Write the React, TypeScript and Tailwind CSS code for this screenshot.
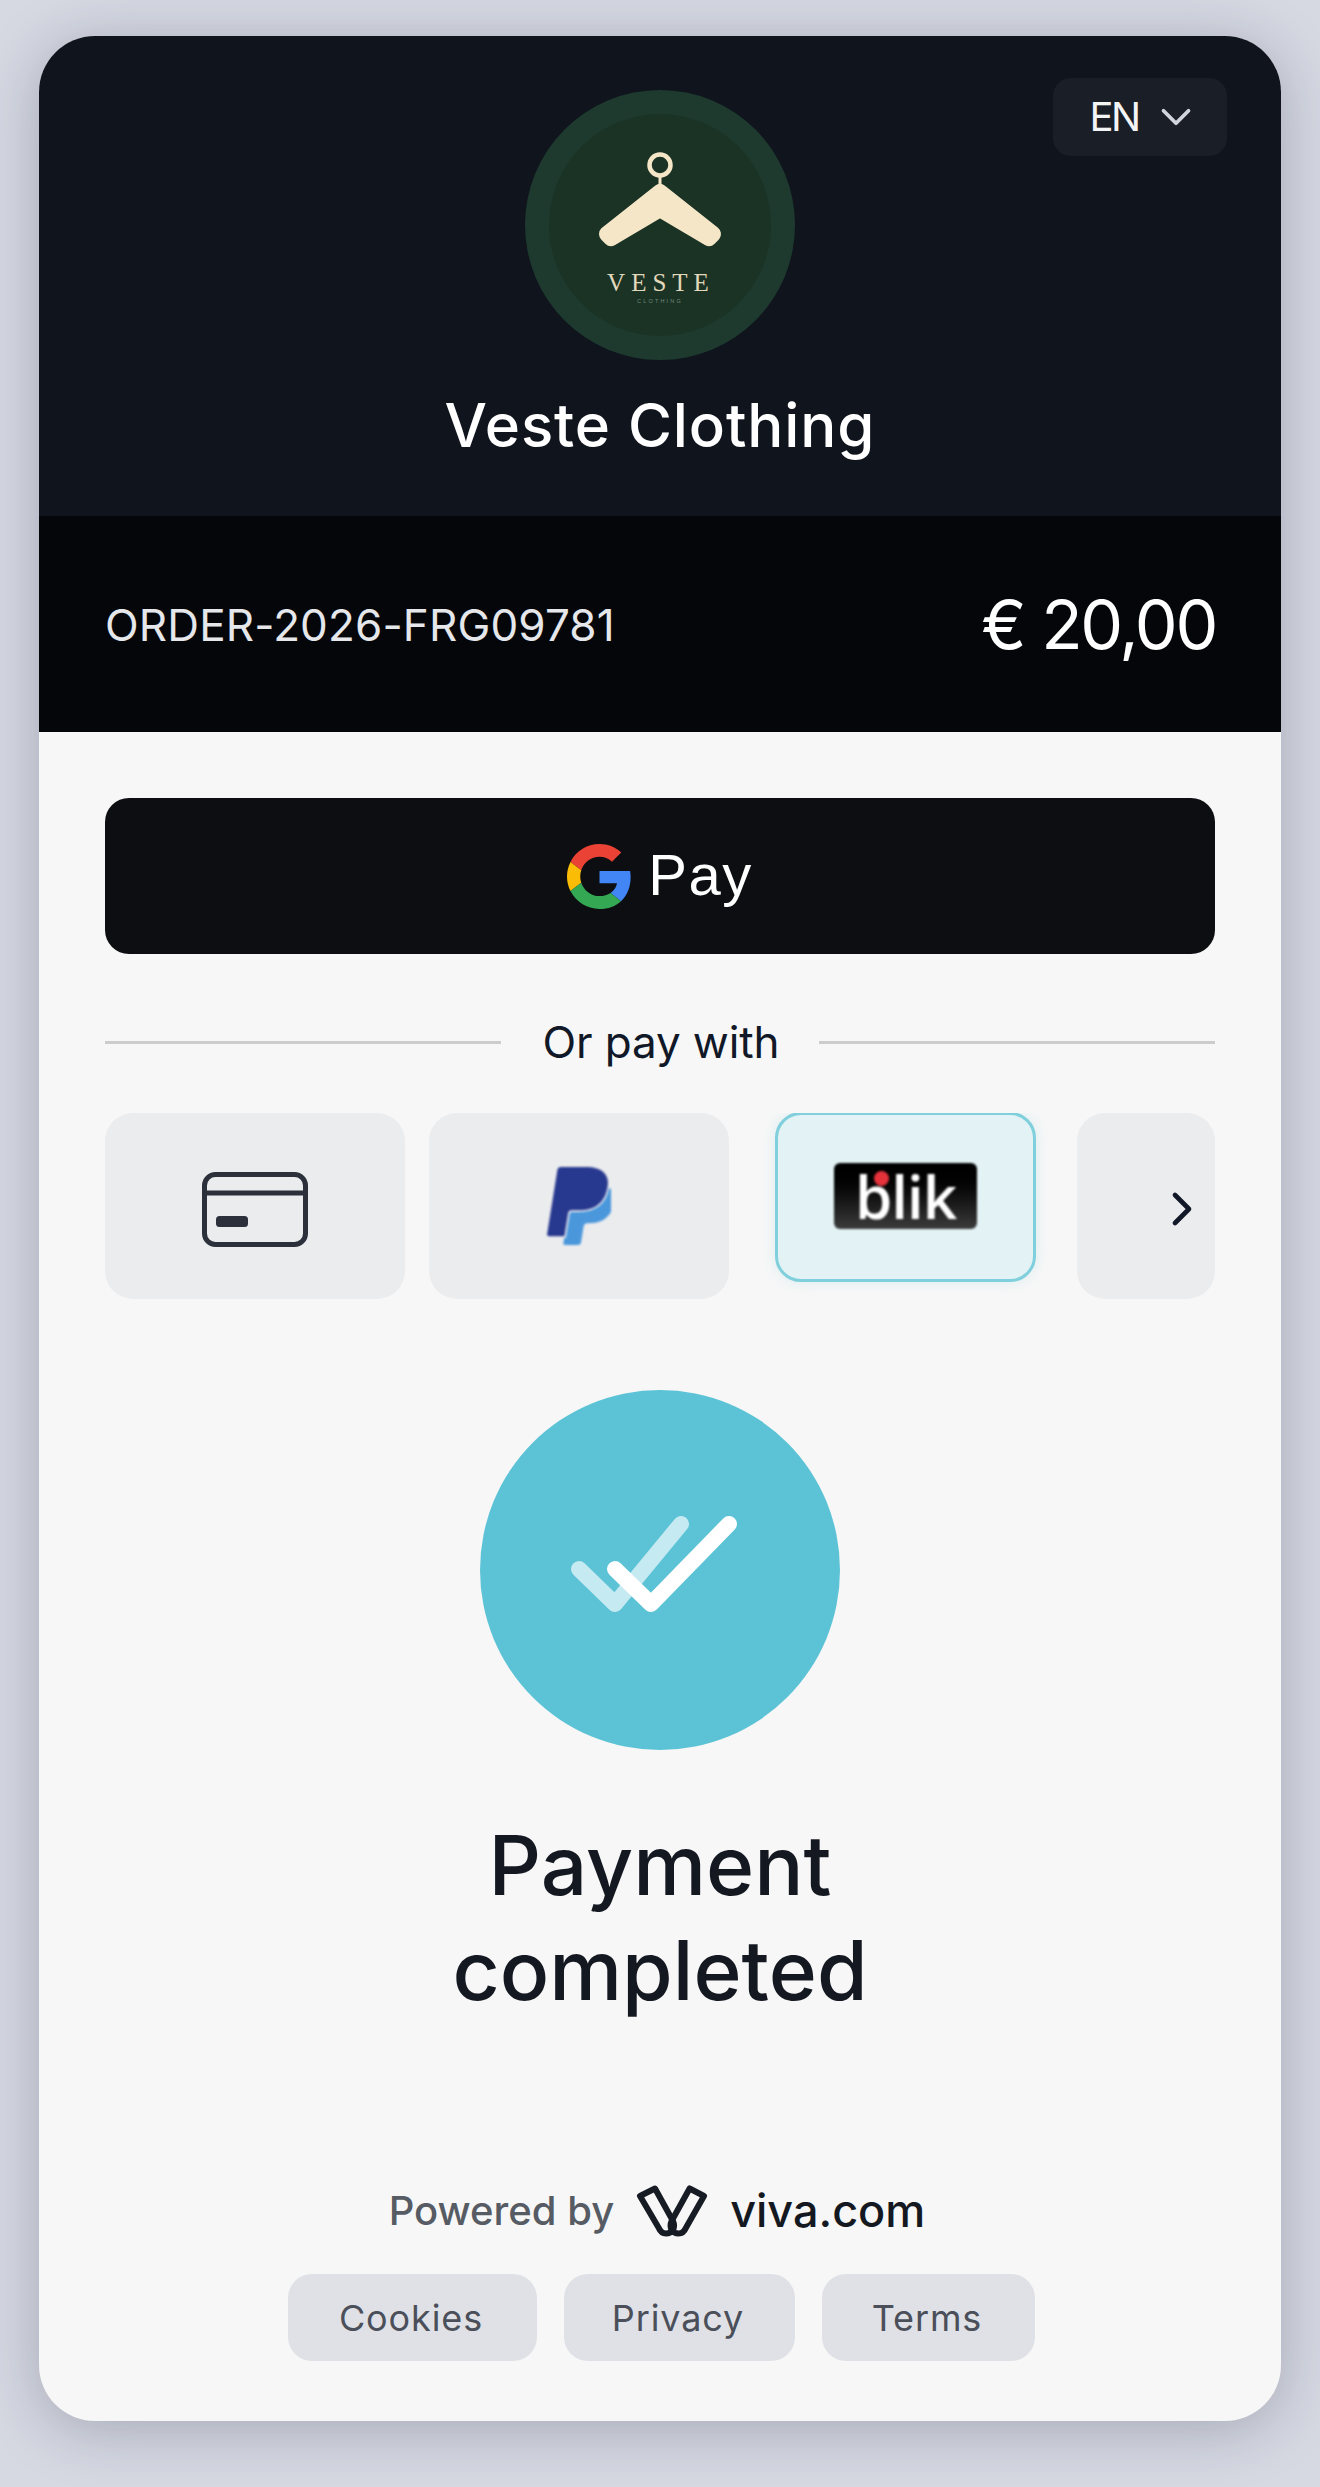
import { ChevronDown, ChevronRight } from 'lucide-react';

const inter = "font-['Inter','Noto_Sans',sans-serif]";

function VesteLogo() {
  return (
    <svg width="270" height="270" viewBox="0 0 270 270">
      <circle cx="135" cy="135" r="135" fill="#1e3a2f" />
      <circle cx="135" cy="135" r="111" fill="#1a3325" />
      <circle cx="135" cy="75" r="10.5" fill="none" stroke="#f5e6c8" strokeWidth="4.5" />
      <path d="M135 86v10" stroke="#f5e6c8" strokeWidth="3" />
      <polygon
        points="135,102 188,144 184,148 135,119 86,148 82,144"
        fill="#f5e6c8"
        stroke="#f5e6c8"
        strokeWidth="16"
        strokeLinejoin="round"
      />
      <text
        x="136"
        y="201"
        textAnchor="middle"
        fontFamily="'Liberation Serif', serif"
        fontSize="25"
        letterSpacing="6"
        fill="#e2d8bb"
      >
        VESTE
      </text>
      <text
        x="135"
        y="213"
        textAnchor="middle"
        fontFamily="'Liberation Sans', sans-serif"
        fontSize="5.5"
        letterSpacing="2.2"
        fill="#71897a"
      >
        CLOTHING
      </text>
    </svg>
  );
}

function GoogleG() {
  return (
    <svg width="65" height="65" viewBox="0 0 48 48">
      <path fill="#EA4335" d="M24 9.5c3.54 0 6.71 1.22 9.21 3.6l6.85-6.85C35.9 2.38 30.47 0 24 0 14.62 0 6.51 5.38 2.56 13.22l7.98 6.19C12.43 13.72 17.74 9.5 24 9.5z" />
      <path fill="#4285F4" d="M46.98 24.55c0-1.57-.15-3.09-.38-4.55H24v9.02h12.94c-.58 2.96-2.26 5.48-4.78 7.18l7.73 6c4.51-4.18 7.09-10.36 7.09-17.65z" />
      <path fill="#FBBC05" d="M10.53 28.59c-.48-1.45-.76-2.99-.76-4.59s.27-3.14.76-4.59l-7.98-6.19C.92 16.46 0 20.12 0 24c0 3.88.92 7.54 2.56 10.78l7.97-6.19z" />
      <path fill="#34A853" d="M24 48c6.48 0 11.93-2.13 15.89-5.81l-7.73-6c-2.15 1.45-4.92 2.3-8.16 2.3-6.26 0-11.57-4.22-13.47-9.91l-7.98 6.19C6.51 42.62 14.62 48 24 48z" />
    </svg>
  );
}

function CardIcon() {
  return (
    <svg width="106" height="75" viewBox="0 0 106 75" fill="none" className="mt-[6px]">
      <rect x="2.5" y="2.5" width="101" height="70" rx="11" stroke="#2b303b" strokeWidth="5" />
      <path d="M3 21h100" stroke="#2b303b" strokeWidth="5" />
      <rect x="14" y="44" width="32" height="11" rx="3.5" fill="#2b303b" />
    </svg>
  );
}

function PayPalIcon() {
  return (
    <svg width="64" height="78" viewBox="1.8 0 19.4 24" preserveAspectRatio="none" className="blur-[1px]">
      <path
        fill="#27388f"
        d="M7.076 21.337H2.47a.641.641 0 0 1-.633-.74L4.944.901C5.026.382 5.474 0 5.998 0h7.46c2.57 0 4.578.543 5.69 1.81 1.01 1.15 1.304 2.42 1.012 4.287-.023.143-.047.288-.077.437-.983 5.05-4.349 6.797-8.647 6.797h-2.19c-.524 0-.968.382-1.05.9l-1.12 7.106z"
      />
      <path
        fill="#4a97dc"
        d="M21.222 6.917a3.35 3.35 0 0 0-.607-.541c-.013.076-.026.175-.041.254-.93 4.778-4.005 7.201-9.138 7.201h-2.19a.563.563 0 0 0-.556.479l-1.187 7.527h-.506l-.24 1.516a.56.56 0 0 0 .554.647h3.882c.46 0 .85-.334.922-.788.06-.26.76-4.852.816-5.09a.932.932 0 0 1 .923-.788h.58c3.76 0 6.705-1.528 7.565-5.946.36-1.847.174-3.388-.777-4.471z"
      />
    </svg>
  );
}

function BlikLogo() {
  return (
    <div className="relative -mt-[3px] flex h-[66px] w-[143px] items-center justify-center rounded-[6px] bg-gradient-to-b from-[#000000] to-[#3c3c3c] blur-[0.8px]">
      <span className="font-['Open_Sans',sans-serif] text-[60px] leading-none font-semibold tracking-[-1px] text-white">
        blik
      </span>
      <span className="absolute top-[8px] left-[40px] h-[15px] w-[15px] rounded-full bg-[#e5323b]" />
    </div>
  );
}

function DoubleCheck() {
  return (
    <svg width="360" height="360" viewBox="0 0 360 360" fill="none" strokeLinecap="round" strokeLinejoin="round" strokeWidth="16">
      <path d="M99 179l36 35 66-80" stroke="#ffffff" strokeOpacity="0.65" />
      <path d="M135 179l36 35 78-80" stroke="#ffffff" />
    </svg>
  );
}

function VivaLogo() {
  return (
    <svg width="72" height="52" viewBox="0 0 72 52" fill="none" stroke="#161b24" strokeWidth="6" strokeLinejoin="round">
      <path d="M4 11L19 3.5 37 36c3 7-1 12.5-7 12.5-4 0-6-2.5-7.5-6L4 11z" />
      <path d="M68 11L53.6 3.5 35.6 36c-3 7 1 12.5 7 12.5 4 0 6-2.5 7.5-6L68 11z" />
    </svg>
  );
}

export default function App() {
  return (
    <div className={`min-h-[2487px] bg-[#d6d9e2] px-[39px] pt-[36px] pb-[66px] ${inter}`}>
      <div className="flex h-[2385px] flex-col overflow-hidden rounded-[56px] bg-[#f7f7f7] shadow-[0_8px_60px_rgba(20,24,50,0.25)]">
        {/* Merchant header */}
        <header className="relative flex h-[480px] flex-col items-center bg-[#0f141d] pt-[54px]">
          <button className="absolute top-[42px] right-[54px] flex h-[78px] w-[174px] items-center justify-center gap-[12px] rounded-[18px] bg-[#1a1e27] pl-[10px] text-[40px] tracking-[-2.5px] text-[#f3f4f6]">
            EN
            <ChevronDown size={50} strokeWidth={1.8} className="text-[#d1d5db]" />
          </button>
          <VesteLogo />
          <h1 className="mt-[30px] text-[60px] leading-[70px] font-medium tracking-[0.9px] text-white">Veste Clothing</h1>
        </header>

        {/* Order summary */}
        <div className="flex h-[216px] items-center justify-between bg-[#04060a] pr-[65px] pl-[66px]">
          <span className="mt-[2px] text-[44px] tracking-[0.15px] text-[#e5e7eb]">ORDER-2026-FRG09781</span>
          <span className="text-[68px] leading-none tracking-[-2.3px] text-white">€ 20,00</span>
        </div>

        <main className="flex flex-1 flex-col px-[66px] pt-[66px]">
          <button className="flex h-[156px] w-full items-center justify-center gap-[16px] rounded-[24px] bg-[#0c0e12]">
            <GoogleG />
            <span className="-mt-[4px] font-['Liberation_Sans',sans-serif] text-[58px] tracking-[1.5px] text-white">Pay</span>
          </button>

          <div className="mt-[66px] flex h-[44px] items-center">
            <div className="h-[3px] flex-1 bg-[#cccccc]" />
            <span className="w-[318px] pl-[2px] text-center text-[44px] tracking-[-0.1px] text-[#111827]">Or pay with</span>
            <div className="h-[3px] flex-1 bg-[#cccccc]" />
          </div>

          {/* Payment methods */}
          <div className="mt-[49px] flex h-[186px] items-start overflow-hidden">
            <div className="flex h-[186px] w-[300px] shrink-0 items-center justify-center rounded-[28px] bg-[#ebecee]">
              <CardIcon />
            </div>
            <div className="ml-[24px] flex h-[186px] w-[300px] shrink-0 items-center justify-center rounded-[28px] bg-[#ebecee]">
              <PayPalIcon />
            </div>
            <div className="-mt-[1px] ml-[46px] flex h-[170px] w-[261px] shrink-0 items-center justify-center rounded-[26px] border-[3px] border-[#7fd0dc] bg-[#e3f3f5] shadow-[0_0_14px_rgba(92,195,214,0.18)]">
              <BlikLogo />
            </div>
            <div className="ml-[41px] flex h-[186px] flex-1 items-center justify-end rounded-[28px] bg-[#ebecee] pt-[6px] pr-[5px]">
              <ChevronRight size={56} strokeWidth={2} className="text-[#111827]" />
            </div>
          </div>

          {/* Result */}
          <div className="mt-[91px] flex flex-col items-center">
            <div className="flex h-[360px] w-[360px] items-center justify-center rounded-full bg-[#5cc3d6]">
              <DoubleCheck />
            </div>
            <h2 className="mt-[63px] w-[560px] text-center text-[82px] leading-[105px] font-medium text-[#141821]">
              Payment completed
            </h2>
          </div>

          {/* Footer */}
          <footer className="mt-auto flex flex-col items-center pb-[60px]">
            <div className="mr-[6px] flex h-[52px] items-center">
              <span className="text-[40px] font-medium text-[#565b64]">Powered by</span>
              <span className="ml-[22px]">
                <VivaLogo />
              </span>
              <span className="ml-[22px] text-[45px] font-medium text-[#141821]">viva.com</span>
            </div>
            <nav className="mt-[37px] ml-[3px] flex gap-[27px] text-[36px] tracking-[0.9px] text-[#4b4f5a]">
              <a className="flex h-[87px] w-[249px] items-center justify-center rounded-[24px] bg-[#dfe1e6] pr-[3px]">Cookies</a>
              <a className="flex h-[87px] w-[231px] items-center justify-center rounded-[24px] bg-[#dfe1e6] pr-[3px]">Privacy</a>
              <a className="flex h-[87px] w-[213px] items-center justify-center rounded-[24px] bg-[#dfe1e6] pr-[3px]">Terms</a>
            </nav>
          </footer>
        </main>
      </div>
    </div>
  );
}
